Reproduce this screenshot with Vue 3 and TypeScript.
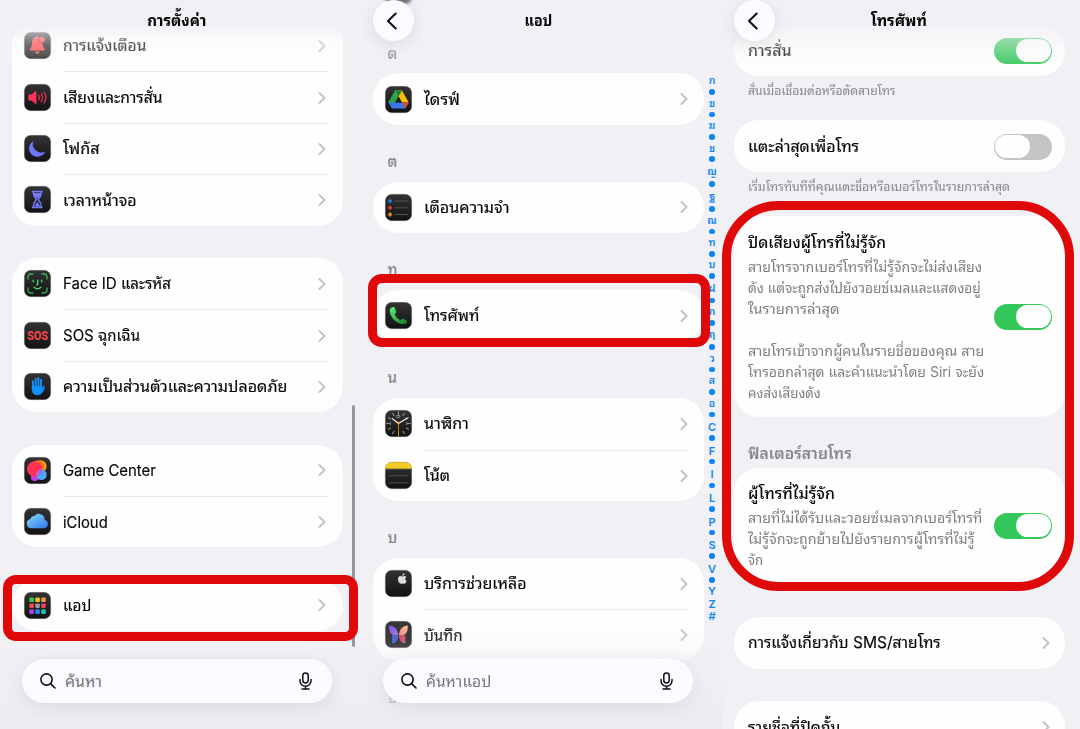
<script setup lang="ts">
import type { Directive } from 'vue'

interface Row { icon: string; label: string; w: number }
interface Section { head?: string; rows: Row[] }
interface Panel {
  key: string
  title: string
  titleW: number
  back: boolean
  search: string
  searchW: number
  sections: Section[]
}

// Scales a label horizontally so that it occupies the given width.
const fit = (el: HTMLElement, w: number) => {
  el.style.transform = 'none'
  const natural = el.offsetWidth
  if (natural > 0 && w > 0) el.style.transform = `scaleX(${w / natural})`
}
const vFit: Directive<HTMLElement, number> = {
  mounted(el, binding) {
    fit(el, binding.value)
    document.fonts.ready.then(() => fit(el, binding.value))
  },
}

const panels: Panel[] = [
  {
    key: 'settings', title: 'การตั้งค่า', titleW: 59.5, back: false, search: 'ค้นหา', searchW: 37,
    sections: [
      { rows: [
        { icon: 'bell', label: 'การแจ้งเตือน', w: 83 },
        { icon: 'sound', label: 'เสียงและการสั่น', w: 99.5 },
        { icon: 'moon', label: 'โฟกัส', w: 36 },
        { icon: 'hourglass', label: 'เวลาหน้าจอ', w: 74 },
      ] },
      { rows: [
        { icon: 'face', label: 'Face ID และรหัส', w: 108 },
        { icon: 'sos', label: 'SOS ฉุกเฉิน', w: 77 },
        { icon: 'hand', label: 'ความเป็นส่วนตัวและความปลอดภัย', w: 224 },
      ] },
      { rows: [
        { icon: 'game', label: 'Game Center', w: 92.5 },
        { icon: 'cloud', label: 'iCloud', w: 45 },
      ] },
      { rows: [{ icon: 'apps', label: 'แอป', w: 28 }] },
    ],
  },
  {
    key: 'apps', title: 'แอป', titleW: 28, back: true, search: 'ค้นหาแอป', searchW: 65,
    sections: [
      { head: 'ด', rows: [{ icon: 'drive', label: 'ไดรฟ์', w: 35.5 }] },
      { head: 'ต', rows: [{ icon: 'reminders', label: 'เตือนความจำ', w: 85 }] },
      { head: 'ท', rows: [{ icon: 'phone', label: 'โทรศัพท์', w: 55.5 }] },
      { head: 'น', rows: [
        { icon: 'clock', label: 'นาฬิกา', w: 45 },
        { icon: 'notes', label: 'โน้ต', w: 26.5 },
      ] },
      { head: 'บ', rows: [
        { icon: 'support', label: 'บริการช่วยเหลือ', w: 102.5 },
        { icon: 'journal', label: 'บันทึก', w: 38.5 },
      ] },
      { head: 'ป', rows: [] },
    ],
  },
]

const index: [string, number][] = [
  ['ก', 13.4], ['ข', 13.4], ['ฆ', 13.4], ['ช', 13.4], ['ญ', 16], ['ฐ', 16], ['ณ', 13.4],
  ['ท', 13.2], ['บ', 13.4], ['ฝ', 15.5], ['ภ', 13.4], ['ฤ', 15], ['ว', 13.6], ['ส', 13.6], ['อ', 13.4],
  ['C', 14.7], ['F', 14.7], ['I', 14.7], ['L', 14.7], ['P', 14.7], ['S', 14.7], ['V', 14.7],
]
const tail = ['Y', 'Z', '#']

const silence: [string, number][] = [
  ['สายโทรจากเบอร์โทรที่ไม่รู้จักจะไม่ส่งเสียง', 234.5],
  ['ดัง แต่จะถูกส่งไปยังวอยซ์เมลและแสดงอยู่', 232.5],
  ['ในรายการล่าสุด', 91],
  ['', 0],
  ['สายโทรเข้าจากผู้คนในรายชื่อของคุณ สาย', 236.5],
  ['โทรออกล่าสุด และคำแนะนำโดย Siri จะยัง', 236.5],
  ['คงส่งเสียงดัง', 72.5],
]
const filter: [string, number][] = [
  ['สายที่ไม่ได้รับและวอยซ์เมลจากเบอร์โทรที่', 234.5],
  ['ไม่รู้จักจะถูกย้ายไปยังรายการผู้โทรที่ไม่รู้', 226.5],
  ['จัก', 15],
]
const ticks = Array.from({ length: 12 }, (_, i) => i * 30)
const tiles = ['#35c759', '#f5c518', '#f2963a', '#ef4b4b', '#98989d', '#ee3f62', '#b43fe0', '#2186f0', '#1fbfae']
</script>

<template>
  <main class="screens">
    <section v-for="p in panels" :key="p.key" class="panel" :class="p.key">
      <div class="content">
        <template v-for="(s, si) in p.sections" :key="si">
          <div v-if="s.head" class="head"><span>{{ s.head }}</span></div>
          <div v-if="s.rows.length" class="card">
            <div v-for="r in s.rows" :key="r.icon" class="row">
              <svg class="icon" viewBox="0 0 27 27">
                <defs>
                  <linearGradient id="dark" x1="0" y1="0" x2="0" y2="1"><stop offset="0" stop-color="#333" /><stop offset="1" stop-color="#131314" /></linearGradient>
                  <linearGradient id="sky" x1="0" y1="0" x2="1" y2="1"><stop offset="0" stop-color="#8bdcf5" /><stop offset="1" stop-color="#2c74f0" /></linearGradient>
                  <linearGradient id="green" x1="0" y1="0" x2="1" y2="1"><stop offset="0" stop-color="#5ff07a" /><stop offset="1" stop-color="#17742b" /></linearGradient>
                  <linearGradient id="wingL" x1="0" y1="0" x2="1" y2="1"><stop offset="0" stop-color="#6b4fe0" /><stop offset="1" stop-color="#a869e6" /></linearGradient>
                  <linearGradient id="wingR" x1="1" y1="0" x2="0" y2="1"><stop offset="0" stop-color="#ffc097" /><stop offset="1" stop-color="#ee7f72" /></linearGradient>
                </defs>
                <rect x="0.3" y="0.3" width="26.4" height="26.4" rx="6.3" fill="url(#dark)" stroke="#77777a" stroke-opacity="0.55" stroke-width="0.6" />
                <g v-if="r.icon === 'bell'" fill="#ff4040">
                  <path d="M13.3 4.6c-3.6 0-5 2.7-5.2 5.9-.2 3.3-.7 4.8-2 6.300-.6.8-.3 1.700.8 1.700h12.800c1.100 0 1.400-.9.8-1.700-1.300-1.500-1.800-3-2-6.300-.2-3.200-1.600-5.900-5.200-5.900z" />
                  <path d="M11 19.600h4.600c-.3 1.400-1.200 2.100-2.300 2.100s-2-.7-2.300-2.100z" />
                  <circle cx="18" cy="7.800" r="3.300" stroke="#262627" stroke-width="0.600" />
                </g>
                <g v-else-if="r.icon === 'sound'" fill="none" stroke="#fb3158" stroke-linecap="round">
                  <path d="M4.300 11.400c0-.5.3-.8.8-.8h2.400l4-3.500c.4-.3.9-.1.9.4v12c0 .5-.5.7-.9.4l-4-3.500H5.100c-.5 0-.8-.3-.8-.8z" fill="#fb3158" stroke="none" />
                  <path d="M14.700 11.200q1.300 2.300 0 4.600M17.300 9.700q2.500 3.800 0 7.600M20.100 8.200q3.600 5.300 0 10.600" stroke-width="1.200" />
                </g>
                <path v-else-if="r.icon === 'moon'" d="M9.600 5.900A8.400 8.400 0 1 0 21.200 16.600 8.400 8.400 0 0 1 9.600 5.900z" fill="#6f76fa" />
                <g v-else-if="r.icon === 'hourglass'" fill="none" stroke="#7378f8" stroke-width="1.500" stroke-linejoin="round">
                  <path d="M7.900 5.600h10.800M7.900 21.500h10.800M9.200 5.800c0 4.600 1.200 5.500 3.200 7.700-2 2.200-3.200 3.200-3.200 7.800M17.400 5.800c0 4.600-1.200 5.500-3.200 7.700 2 2.200 3.200 3.200 3.200 7.800" />
                  <path d="M9.500 7h7.600c-.2 2-1.600 3.600-3.800 5.700C11 10.600 9.700 9 9.500 7zM10 20.500l3.300-4.500 3.300 4.500z" fill="#7378f8" stroke="none" />
                </g>
                <g v-else-if="r.icon === 'face'" fill="none" stroke="#36b358" stroke-width="1.300" stroke-linecap="round">
                  <path d="M4 9V7.200C4 5 5 4 7.200 4H9M18 4h1.800C22 4 23 5 23 7.200V9M23 18v1.800c0 2.200-1 3.200-3.200 3.200H18M9 23H7.200C5 23 4 22 4 19.800V18" />
                  <path d="M9.300 10.200v1.600M17.700 10.200v1.600M13.700 10.200v3.900q0 .8-1 .8M10 17.300q3.500 3 7 0" stroke="#4bdb73" />
                </g>
                <text v-else-if="r.icon === 'sos'" x="13.500" y="18" text-anchor="middle" textLength="21" lengthAdjust="spacingAndGlyphs" class="sos">SOS</text>
                <g v-else-if="r.icon === 'hand'" stroke="#1191ff" fill="none" stroke-linecap="round">
                  <path d="M9 8.200v7M11.700 5.700v8M14.400 5v8M17 6.800v8" stroke-width="1.900" />
                  <path d="M8 13h10v3l1.300-2.500c.4-.7 1.500-.4 1.300.4-1 4.200-2.600 8-7.100 8-3.800 0-5.500-2.400-5.500-6z" fill="#1191ff" stroke-width="0.400" />
                </g>
                <g v-else-if="r.icon === 'game'">
                  <circle cx="16.500" cy="9.300" r="6.100" fill="#fda414" />
                  <circle cx="10.800" cy="20" r="4" fill="#c23df1" />
                  <circle cx="10.700" cy="12" r="7.700" fill="#ff3152" />
                  <path d="M9.900 5a6.100 6.100 0 0 1 8.200 9.900A7.700 7.700 0 0 0 9.900 5z" fill="#ff6b20" />
                  <circle cx="17.500" cy="17.700" r="5.300" fill="#4aa5f6" />
                  <path d="M12.500 19.600a5.300 5.300 0 0 1 5.700-7.200 7.700 7.700 0 0 1-5.700 7.200z" fill="#b264dc" />
                </g>
                <path v-else-if="r.icon === 'cloud'" d="M7.300 20.300a4.700 4.700 0 0 1-.9-9.300 4 4 0 0 1 4-2.900 5.700 5.700 0 0 1 10.200 3.600 4.400 4.400 0 0 1-.5 8.600z" fill="url(#sky)" />
                <g v-else-if="r.icon === 'apps'">
                  <rect v-for="(c, i) in tiles" :key="c" :x="5.300 + (i % 3) * 5.950" :y="5.500 + Math.floor(i / 3) * 5.900" width="4.600" height="4.600" rx="1.200" :fill="c" />
                </g>
                <g v-else-if="r.icon === 'drive'">
                  <path d="M10 4.500h7l-9.800 18L3.400 16z" fill="#2ba24c" />
                  <path d="M10 4.500h7l6.700 12H17z" fill="#fcbd06" />
                  <path d="M6.700 16.500h17l-3.500 6H7.200L3.400 16.500z" fill="#3b78e7" />
                  <path d="M17.300 16.500h6.400l-3.500 6z" fill="#e5432f" />
                  <path d="M13.500 10.400l3.400 6.100h-6.800z" fill="#1d1d1e" />
                  <path d="M10 4.500h7l-3.500 6.100z" fill="#198038" />
                </g>
                <g v-else-if="r.icon === 'reminders'" stroke="#58585b" stroke-width="0.900">
                  <path d="M9.700 7h13.500M9.700 13.800h13.500M9.700 20.500h13.500" />
                  <circle cx="5" cy="7" r="2" fill="#2880ee" stroke="#24466f" stroke-width="0.700" />
                  <circle cx="5" cy="13.700" r="2" fill="#ee4238" stroke="#6f2d2a" stroke-width="0.700" />
                  <circle cx="5" cy="20.500" r="2" fill="#f08f1e" stroke="#704c20" stroke-width="0.700" />
                </g>
                <path v-else-if="r.icon === 'phone'" d="M7.300 5.200C5.400 5.600 4.500 7.300 4.800 9.500c.8 6 6 11.500 12.300 12.600 1.900.3 3.900-.1 4.700-1.300.7-1.100.2-2.200-1-2.800l-2.300-1c-.9-.4-1.700-.2-2.200.5-.5.6-1 .7-1.700.3-2-1.100-3.600-2.900-4.500-5-.3-.7-.1-1.200.4-1.700.7-.6.9-1.300.6-2.200L10 6.500c-.4-1.200-1.400-1.600-2.700-1.300z" fill="url(#green)" />
                <g v-else-if="r.icon === 'clock'" stroke-linecap="round">
                  <path v-for="t in ticks" :key="t" d="M13.500 1.800v2.600" stroke="#d0d0d0" stroke-width="0.700" :transform="`rotate(${t} 13.500 13.500)`" />
                  <path d="M12.200 5.500h2.600v2h-2.600zM5.300 12.300v2.400M21.700 12.300v2.400" fill="none" stroke="#aaa" stroke-width="0.700" />
                  <path d="M13.500 13.500L7.300 8.600M13.500 13.500L22.300 8" stroke="#fff" stroke-width="1.100" />
                  <path d="M13.500 11.500v13.800" stroke="#e9971c" stroke-width="0.800" />
                  <circle cx="13.500" cy="13.500" r="1.100" fill="#e9971c" />
                </g>
                <g v-else-if="r.icon === 'notes'">
                  <path d="M.3 6.500V6.300A6 6 0 0 1 6.300.3h14.400a6 6 0 0 1 6 6v.5H.3z" fill="#f2cb24" />
                  <path d="M1 7.500h25" stroke="#77777a" stroke-width="0.700" stroke-dasharray="0.700 0.900" />
                  <path d="M3.500 13.800h20M3.500 20.800h20" stroke="#59595c" stroke-width="0.800" />
                </g>
                <g v-else-if="r.icon === 'support'" fill="#dedee0">
                  <path d="M17.600 6.400c-.7 0-1.300-.4-2.100-.4-1.500 0-2.500 1.300-2.500 3.100 0 2.200 1.400 4.700 2.700 4.700.7 0 1-.4 1.800-.4s1.100.4 1.800.4c1 0 1.900-1.600 2.300-2.700-1.700-.8-1.800-3.100-.2-4-.6-.8-1.400-1.100-2-1.100-.8 0-1.300.4-1.800.4z" />
                  <path d="M17.400 5.900c-.1-1.400.9-2.400 2.100-2.600.1 1.400-.9 2.500-2.100 2.600z" />
                </g>
                <g v-else-if="r.icon === 'journal'">
                  <path d="M4 4.500c5 .2 8.600 3.300 9.200 9.400-2.500.4-5 .4-6.300-.6C4.500 11.500 4 8.500 4 4.500z" fill="url(#wingL)" />
                  <path d="M22.800 4.500c-5 .2-8.200 3.300-8.800 9.400 2.500.4 4.600.4 6-.6 2.400-1.800 2.800-4.800 2.800-8.800z" fill="url(#wingR)" />
                  <path d="M13.200 14.200c.2 4-1.800 7.700-6 8.500-.4-3.500-.2-7 0-9z" fill="#3253cf" />
                  <path d="M14 14.200c-.2 4 2 7.700 6.200 8.500.4-3.500.2-7-.2-9z" fill="#cc3f61" />
                </g>
              </svg>
              <div class="line">
                <span v-fit="r.w" class="label">{{ r.label }}</span>
                <svg class="chev" viewBox="0 0 8 14"><path d="M1.400 2l5.200 5-5.200 5" /></svg>
              </div>
            </div>
          </div>
        </template>
      </div>

      <div class="fade-top"></div>
      <div class="fade-bottom"></div>
      <div v-if="!p.back" class="scrollbar"></div>
      <div v-if="p.back" class="peek"></div>
      <header class="title"><span v-fit="p.titleW" class="title-text">{{ p.title }}</span></header>
      <div v-if="p.back" class="back"><svg viewBox="0 0 12 18"><path d="M9.700 1.500L2 9l7.700 7.500" /></svg></div>

      <div v-if="p.back" class="index">
        <template v-for="[g, h] in index" :key="g">
          <span class="glyph" :style="{ height: h + 'px' }"><b :class="{ latin: g < 'a' }">{{ g }}</b></span>
          <i class="dot"></i>
        </template>
        <span v-for="g in tail" :key="g" class="glyph tail"><b class="latin">{{ g }}</b></span>
      </div>

      <div class="search">
        <svg class="lens" viewBox="0 0 16 16"><circle cx="6.500" cy="6.500" r="5.600" /><path d="M10.600 10.600l4.400 4.400" /></svg>
        <span v-fit="p.searchW" class="placeholder">{{ p.search }}</span>
        <svg class="mic" viewBox="0 0 13 18"><rect x="3.800" y="0.900" width="5.400" height="10" rx="2.700" /><path d="M1 7.500v1.300a5.500 5.500 0 0 0 11 0V7.500M6.500 14.300v2.600M3 17h7" /></svg>
      </div>
      <div class="marker"></div>
    </section>

    <section class="panel phone">
      <div class="content">
        <div class="card single first">
          <span v-fit="44" class="label">การสั่น</span>
          <span class="toggle on"><i></i></span>
        </div>
        <p class="foot"><span v-fit="147.500">สั่นเมื่อเชื่อมต่อหรือตัดสายโทร</span></p>
        <div class="card single">
          <span v-fit="111.500" class="label">แตะล่าสุดเพื่อโทร</span>
          <span class="toggle"><i></i></span>
        </div>
        <p class="foot"><span v-fit="261.5">เริ่มโทรทันทีที่คุณแตะชื่อหรือเบอร์โทรในรายการล่าสุด</span></p>
        <div class="card detail silence">
          <div class="copy">
            <div class="name"><span v-fit="138">ปิดเสียงผู้โทรที่ไม่รู้จัก</span></div>
            <div v-for="([t, w], i) in silence" :key="i" class="desc"><span v-fit="w">{{ t }}</span></div>
          </div>
          <span class="toggle on"><i></i></span>
        </div>
        <div class="group"><span v-fit="103.500">ฟิลเตอร์สายโทร</span></div>
        <div class="card detail filter">
          <div class="copy">
            <div class="name"><span v-fit="86.500">ผู้โทรที่ไม่รู้จัก</span></div>
            <div v-for="([t, w], i) in filter" :key="i" class="desc"><span v-fit="w">{{ t }}</span></div>
          </div>
          <span class="toggle on"><i></i></span>
        </div>
        <div class="card single link">
          <span v-fit="193" class="label">การแจ้งเกี่ยวกับ SMS/สายโทร</span>
          <svg class="chev" viewBox="0 0 8 14"><path d="M1.400 2l5.200 5-5.200 5" /></svg>
        </div>
        <div class="card single link">
          <span v-fit="92.500" class="label">รายชื่อที่ปิดกั้น</span>
          <svg class="chev" viewBox="0 0 8 14"><path d="M1.400 2l5.200 5-5.200 5" /></svg>
        </div>
      </div>
      <div class="fade-top"></div>
      <header class="title"><span v-fit="56" class="title-text">โทรศัพท์</span></header>
      <div class="back"><svg viewBox="0 0 12 18"><path d="M9.700 1.500L2 9l7.700 7.500" /></svg></div>
      <div class="marker"></div>
    </section>
  </main>
</template>

<style>
body { background: #f0f0f5; overflow: hidden; }
</style>

<style scoped>
.screens {
  display: grid;
  grid-template-columns: 361px 361px 358px;
  width: 1080px;
  height: 729px;
  overflow: hidden;
  background: #f0f0f5;
  color: #050505;
  font-family: Inter, "Noto Sans Thai Looped", "Noto Sans Thai", Loma, "Noto Sans", sans-serif;
  font-size: 15.800px;
}
.panel { position: relative; height: 729px; }
.content { height: 729px; overflow: hidden; box-sizing: border-box; padding-left: 12px; }
.settings .content { padding-top: 20px; padding-left: 11.500px; display: flex; flex-direction: column; gap: 32.400px; }
.apps .content { padding-top: 16.500px; }
.phone .content { padding-top: 24.500px; padding-left: 11.700px; }
.card { width: 331.300px; flex: none; background: #fefefe; border-radius: 25px; box-sizing: border-box; }
.row { height: 51.400px; display: flex; align-items: center; padding-left: 12px; }
.settings .row { padding-left: 12.500px; }
.icon { width: 27px; height: 27px; flex: none; overflow: visible; }
.line { flex: 1; height: 100%; margin: 0 15px 0 12px; display: flex; align-items: center; justify-content: space-between; box-sizing: border-box; }
.row + .row .line { border-top: 1px solid #e9e9eb; }
.label { white-space: nowrap; transform-origin: left center; display: inline-block; line-height: 24px; padding-top: 1px; -webkit-text-stroke: 0.150px #050505; }
.chev { width: 8px; height: 14px; margin-right: 1.500px; fill: none; stroke: #c3c3c6; stroke-width: 1.900; stroke-linecap: round; stroke-linejoin: round; }
.sos { font: 700 12px "Roboto", sans-serif; fill: #fb4b4b; }

.head { height: 56.900px; box-sizing: border-box; padding: 26px 0 0 14.500px; line-height: 22px; font-size: 15px; font-weight: 500; color: #86868b; }

.title { position: absolute; top: 9px; left: 0; width: 354px; text-align: center; line-height: 24px; font-size: 15.800px; font-weight: 700; }
.title-text { display: inline-block; white-space: nowrap; }
.fade-top { position: absolute; inset: 0 0 auto 0; height: 72px; background: linear-gradient(#f0f0f5 0, #f0f0f5 20px, rgba(240, 240, 245, 0.600) 34px, rgba(243, 243, 247, 0.300) 52px, rgba(250, 250, 252, 0) 70px); }
.settings .fade-top { background: linear-gradient(#f0f0f5 0, #f0f0f5 24px, rgba(241, 241, 246, 0.600) 33px, rgba(248, 248, 250, 0.350) 44px, rgba(250, 250, 252, 0.280) 55px, rgba(252, 252, 253, 0) 68px); }
.fade-bottom { position: absolute; inset: auto 0 0 0; height: 110px; background: linear-gradient(rgba(244, 244, 247, 0), rgba(240, 240, 245, 0.180) 25px, rgba(238, 238, 243, 0.450) 42px, rgba(236, 236, 240, 0.750)); }
.scrollbar { position: absolute; left: 352px; top: 405px; width: 3px; height: 242px; border-radius: 2px; background: #96969b; }
.peek { position: absolute; left: 24px; top: -23px; width: 27px; height: 27px; border-radius: 7px; background: #77777a; filter: blur(1.500px); }
.back { position: absolute; left: 12px; top: 0; width: 41px; height: 41px; border-radius: 50%; background: #fafaff; box-shadow: 0 4px 18px rgba(0, 0, 0, 0.090); display: flex; align-items: center; justify-content: center; }
.back svg { width: 12px; height: 18px; margin-right: 3px; fill: none; stroke: #111; stroke-width: 2.100; stroke-linecap: round; stroke-linejoin: round; }

.index { position: absolute; left: 341px; top: 74.300px; width: 20px; display: flex; flex-direction: column; align-items: center; color: #0e86f2; font-size: 10.500px; }
.glyph { display: flex; align-items: center; line-height: 12px; }
.glyph b { font-weight: 600; position: relative; top: 0.500px; }
.glyph .latin { font-size: 11px; top: 0.800px; }
.tail { height: 12.400px; }
.dot { width: 5.600px; height: 5.600px; margin: 1.700px 0; border-radius: 50%; background: #0e86f2; flex: none; }

.search { position: absolute; left: 22px; top: 659px; width: 310px; height: 44px; box-sizing: border-box; border-radius: 22px; padding: 0 20.500px 0 18px; background: #fafaff; box-shadow: 0 5px 22px rgba(0, 0, 0, 0.080); display: flex; align-items: center; }
.lens { width: 16px; height: 16px; fill: none; stroke: #111; stroke-width: 1.600; stroke-linecap: round; overflow: visible; }
.placeholder { margin-left: 9px; padding-top: 1px; color: #74747a; display: inline-block; white-space: nowrap; line-height: 24px; transform-origin: left center; }
.mic { width: 13px; height: 18px; margin-left: auto; fill: none; stroke: #111; stroke-width: 1.500; stroke-linecap: round; }

.marker { position: absolute; box-sizing: border-box; border: 9.700px solid #e00909; pointer-events: none; }
.settings .marker { left: 3px; top: 574.500px; width: 355px; height: 66.500px; border-radius: 13px; }
.apps .marker { left: 6.500px; top: 273.500px; width: 342.500px; height: 73.200px; border-radius: 14px; }
.phone .marker { left: 0; top: 201px; width: 352px; height: 389.700px; border-radius: 56px; }

.single { height: 51.600px; padding: 0 12.500px 0 14.500px; display: flex; align-items: center; justify-content: space-between; }
.foot { margin: 0; height: 44.400px; padding: 4.700px 0 0 14.500px; box-sizing: border-box; line-height: 20px; font-size: 12px; color: #85858a; }
.foot span, .name span, .desc span, .group span { display: inline-block; white-space: nowrap; transform-origin: left center; }
.detail { display: flex; align-items: center; justify-content: space-between; padding: 0 12.500px 0 14.500px; }
.silence { height: 201px; margin-top: -0.500px; }
.filter { height: 114px; margin-bottom: 34.500px; }
.copy { display: flex; flex-direction: column; }
.name { height: 26px; line-height: 26px; font-weight: 500; }
.desc { height: 21.100px; line-height: 21.100px; font-size: 14px; color: #7f7f84; }
.group { height: 51.500px; box-sizing: border-box; padding: 25px 0 0 14.500px; line-height: 24px; font-size: 15px; font-weight: 600; color: #85858a; }
.toggle { width: 58.500px; height: 26px; flex: none; border-radius: 13px; background: #c4c4c6; box-sizing: border-box; padding: 1.500px; display: flex; position: relative; top: 0.500px; }
.toggle i { width: 34.500px; height: 23px; border-radius: 11.500px; background: #fefefe; }
.toggle.on { background: #34c759; justify-content: flex-end; }
.link { margin-bottom: 32.700px; }
.link .chev { margin-right: 2.500px; }
</style>
